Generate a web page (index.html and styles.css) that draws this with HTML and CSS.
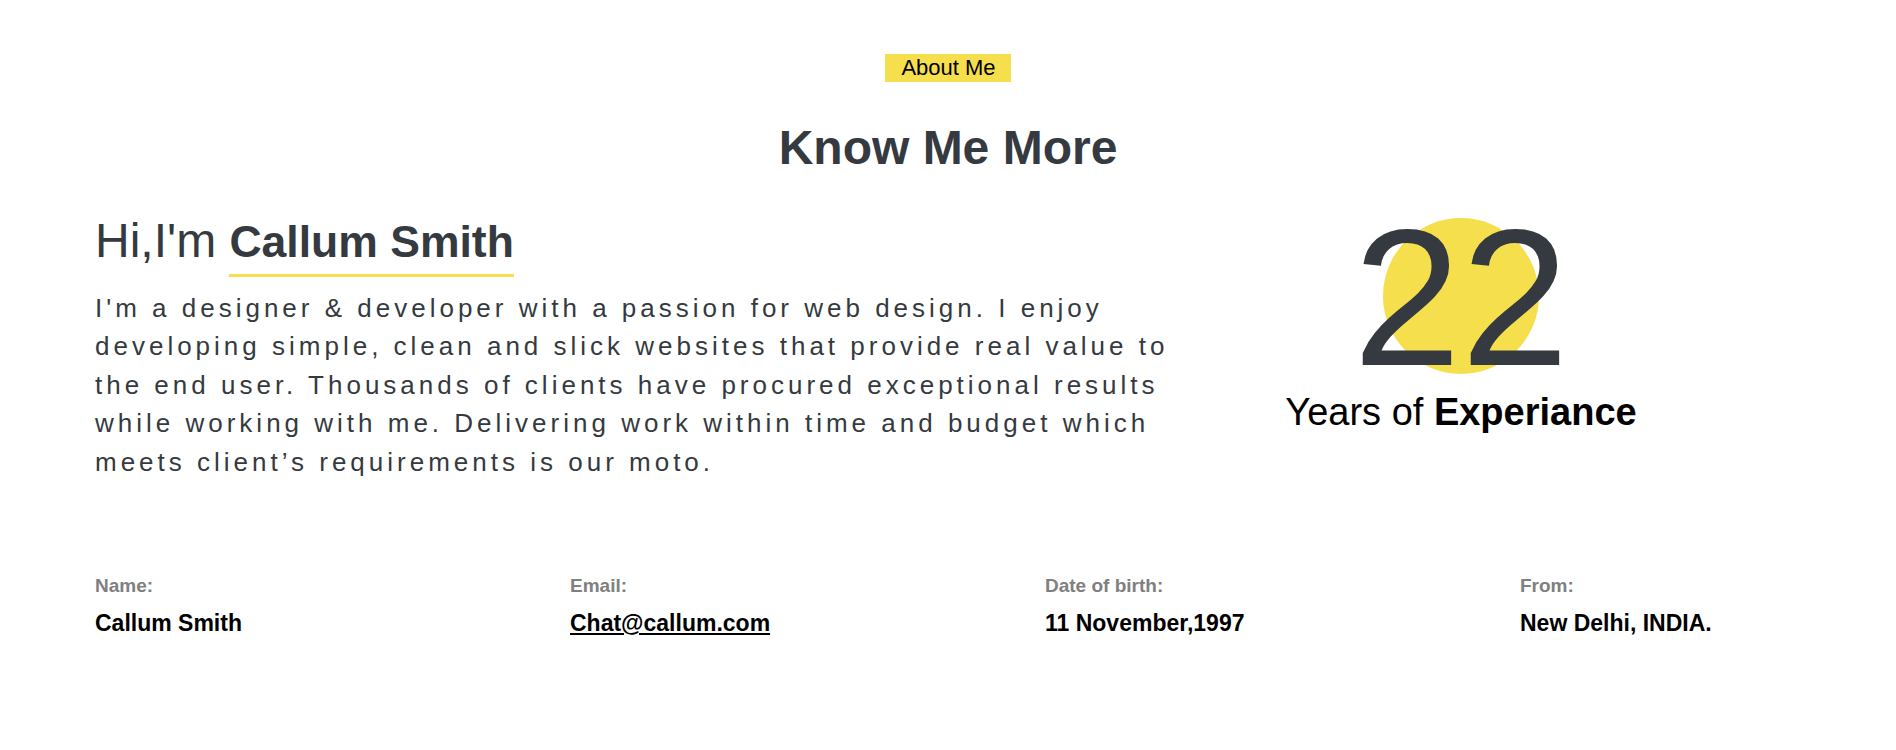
FILE: index.html
```html
<!DOCTYPE html>
<html lang="en">
<head>
<meta charset="utf-8">
<title>About Me</title>
<link rel="stylesheet" href="styles.css">
</head>
<body>
<section class="about">
  <div class="badge-wrap"><span class="badge">About Me</span></div>
  <h2 class="title">Know Me More</h2>
  <div class="intro">
    <div class="intro-text">
      <h3 class="hello">Hi,I'm <span class="name">Callum Smith</span></h3>
      <p class="bio">I'm a designer &amp; developer with a passion for web design. I enjoy developing simple, clean and slick websites that provide real value to the end user. Thousands of clients have procured exceptional results while working with me. Delivering work within time and budget which meets client’s requirements is our moto.</p>
    </div>
    <div class="experience">
      <div class="years-num">22</div>
      <div class="years-label">Years of <b>Experiance</b></div>
    </div>
  </div>
  <div class="info">
    <div class="info-item">
      <div class="info-label">Name:</div>
      <div class="info-value">Callum Smith</div>
    </div>
    <div class="info-item">
      <div class="info-label">Email:</div>
      <div class="info-value"><a class="mail" href="#">Chat@callum.com</a></div>
    </div>
    <div class="info-item">
      <div class="info-label">Date of birth:</div>
      <div class="info-value">11 November,1997</div>
    </div>
    <div class="info-item">
      <div class="info-label">From:</div>
      <div class="info-value">New Delhi, INDIA.</div>
    </div>
  </div>
</section>
</body>
</html>
```

FILE: styles.css
```css
* { box-sizing: border-box; }

body {
  margin: 0;
  background: #ffffff;
  font-family: "Liberation Sans", Arial, sans-serif;
  color: #343a40;
}

.about {
  padding-top: 54px;
}

.badge-wrap {
  text-align: center;
  line-height: 0;
}

.badge {
  display: inline-block;
  background: #f5df4d;
  color: #000;
  font-size: 22px;
  line-height: normal;
  padding: 1px 15px 1px 16px;
}

.title {
  margin: 38px 0 0;
  text-align: center;
  font-size: 48px;
  font-weight: 700;
  color: #343a40;
  line-height: normal;
}

.intro {
  display: grid;
  grid-template-columns: 1085px 562px;
  padding-left: 95px;
  margin-top: 28px;
  align-items: start;
}

.hello {
  margin: 11px 0 20px;
  font-size: 48px;
  font-weight: 400;
  line-height: 54px;
  color: #343a40;
}

.name {
  font-size: 44.5px;
  font-weight: 700;
  padding-bottom: 8px;
  border-bottom: 3px solid #f5df4d;
}

.bio {
  margin: 0;
  font-size: 26px;
  line-height: 38.4px;
  letter-spacing: 4px;
  color: #343a40;
}

.experience {
  text-align: center;
}

.years-num {
  position: relative;
  display: inline-block;
  font-size: 194px;
  line-height: 190px;
  color: #343a40;
  z-index: 0;
}

.years-num::before {
  content: "";
  position: absolute;
  z-index: -1;
  top: 15px;
  left: 50%;
  width: 156px;
  height: 156px;
  margin-left: -78px;
  border-radius: 50%;
  background: #f5df4d;
}

.years-label {
  font-size: 38px;
  line-height: 38px;
  color: #000;
}

.info {
  display: grid;
  grid-template-columns: repeat(4, 475px);
  margin-top: 94px;
}

.info-item {
  padding-left: 95px;
}

.info-label {
  font-size: 19px;
  font-weight: 700;
  color: #808080;
  line-height: normal;
}

.info-value {
  margin-top: 13px;
  font-size: 23px;
  font-weight: 700;
  color: #000;
  line-height: normal;
}

.mail {
  color: #000;
  text-decoration: underline;
}
```
